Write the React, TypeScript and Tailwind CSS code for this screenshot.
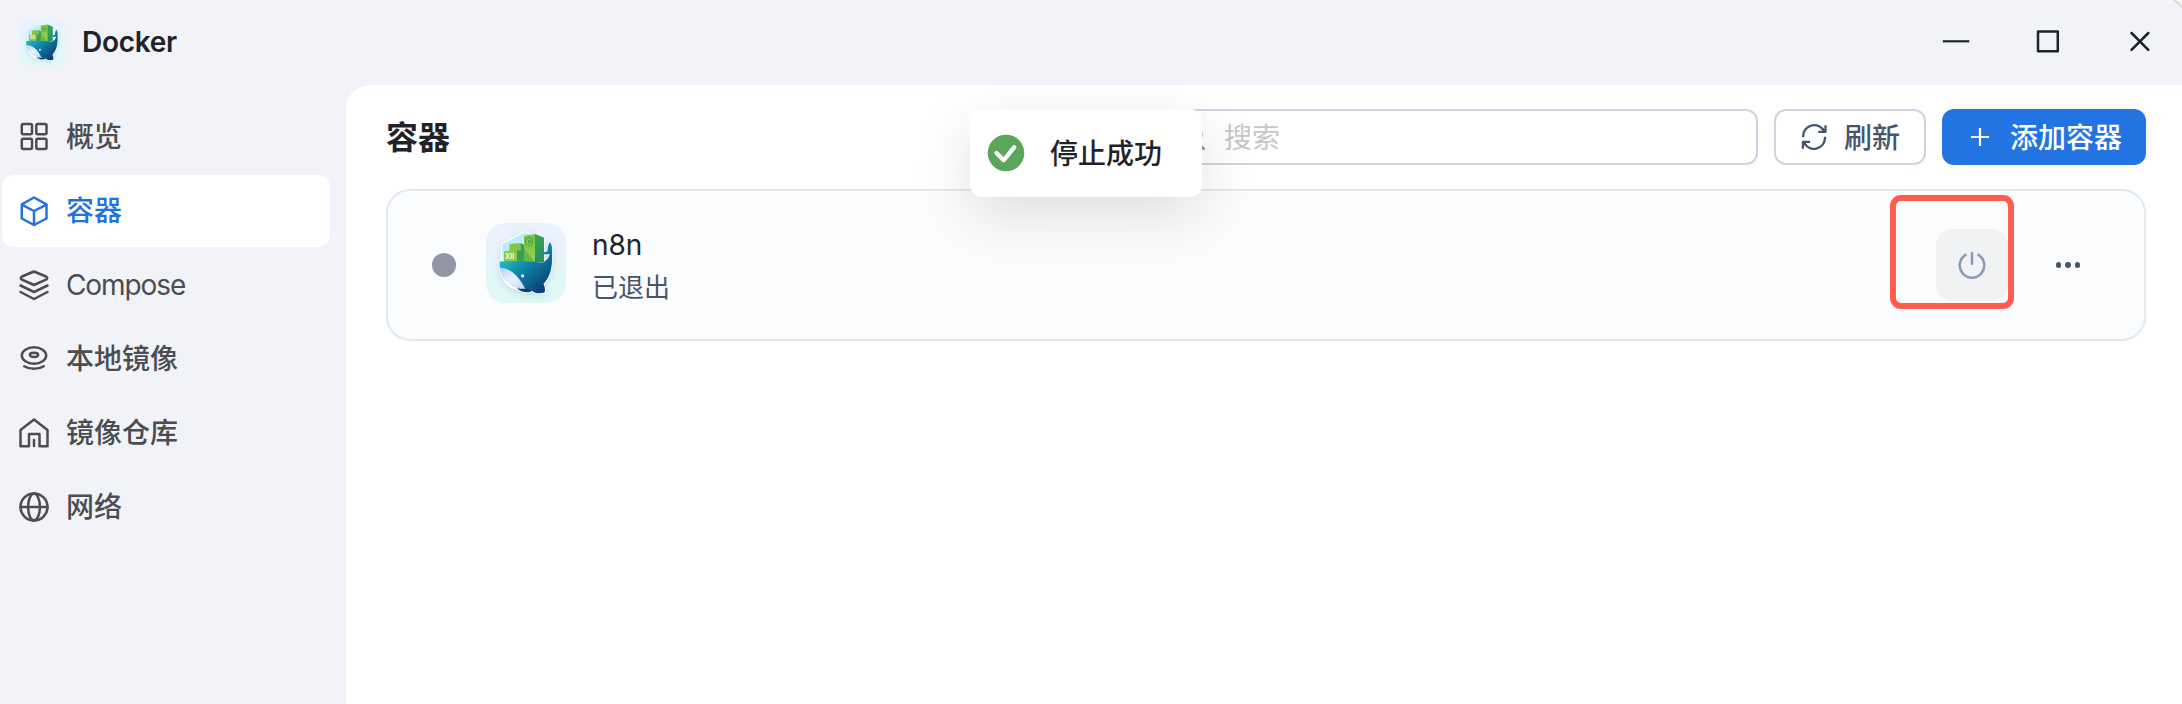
import type { ReactNode } from 'react';

function WhaleLogo({ id, className }: { id: string; className: string }) {
  return (
    <svg viewBox="0 0 80 80" className={className} aria-hidden="true">
      <defs>
        <linearGradient id={`${id}-bg`} x1="0" y1="0" x2="0" y2="1">
          <stop offset="0" stopColor="#ebf1fe" />
          <stop offset="1" stopColor="#dff9f5" />
        </linearGradient>
        <linearGradient id={`${id}-body`} gradientUnits="userSpaceOnUse" x1="18" y1="36" x2="50" y2="72">
          <stop offset="0" stopColor="#22b9c9" />
          <stop offset="0.500" stopColor="#0e7ba0" />
          <stop offset="1" stopColor="#0c3f78" />
        </linearGradient>
        <linearGradient id={`${id}-belly`} x1="0" y1="0" x2="1" y2="1">
          <stop offset="0" stopColor="#b4ccf6" />
          <stop offset="0.500" stopColor="#e9f2ff" />
          <stop offset="1" stopColor="#bcd8fa" />
        </linearGradient>
        <linearGradient id={`${id}-hex`} x1="0" y1="0" x2="1" y2="1">
          <stop offset="0" stopColor="#a9e8fb" />
          <stop offset="1" stopColor="#e4fbff" />
        </linearGradient>
        <linearGradient id={`${id}-box`} x1="0" y1="0" x2="0" y2="1">
          <stop offset="0" stopColor="#79bf44" />
          <stop offset="1" stopColor="#98d24e" />
        </linearGradient>
        <linearGradient id={`${id}-side`} x1="0" y1="0" x2="0" y2="1">
          <stop offset="0" stopColor="#3ea058" />
          <stop offset="1" stopColor="#25935f" />
        </linearGradient>
        <filter id={`${id}-shadow`} x="-30%" y="-30%" width="160%" height="160%">
          <feDropShadow dx="0" dy="2" stdDeviation="3" floodColor="#3c7fa8" floodOpacity="0.220" />
        </filter>
      </defs>
      <rect width="80" height="80" rx="20" fill={`url(#${id}-bg)`} />
      <g filter={`url(#${id}-shadow)`}>
        <path d="M39.500 8.500 L58 18 L58 40 L15.500 40 L15.500 21 Z" fill={`url(#${id}-hex)`} stroke="#fff" strokeWidth="1.200" strokeLinejoin="round" />
        <path d="M13.500 38 H58 C62 36 64 34 63.500 31 C60 32 57 31.500 55.500 29.500 C58 29.300 60 29 61.500 28 C61.500 24 62.500 21 64 19 C66 22 66.500 26 66 30 C66.500 41 65.500 52 57.500 61 C59 64 59.500 68 58.500 69.500 C54 71 49 70.500 45.500 68 C42 70.500 36 70 32 66.500 C21 64.500 12.500 54 13.500 38 Z" fill="#fff" stroke="#fff" strokeWidth="1.400" strokeLinejoin="round" />
      </g>
      <path d="M23.500 21 L34.500 20 V39 H23.500 Z" fill="#84c63f" />
      <path d="M34.500 20 L38.500 22 V39 H34.500 Z" fill="#35a052" />
      <path d="M18 28 L31 27.500 V39 H18 Z" fill="#8bca45" />
      <path d="M31 27.500 H37 L41 39 H31 Z" fill="#36a154" />
      <path d="M38 13 L49 11 V39 H38 Z" fill={`url(#${id}-box)`} />
      <path d="M38 26 L49 39 H38 Z" fill="#3fa64f" opacity="0.550" />
      <path d="M49 11 L58 14.500 V39 H49 Z" fill={`url(#${id}-side)`} />
      <path d="M43 14.500 L46.500 16.200 V21 L43 23 L39.500 21 V16.200 Z M42.500 17 V20.500 M44.800 17.500 H43.500 V19 H44.800 V20.500" fill="none" stroke="#3f9d3d" strokeWidth="0.800" />
      <text x="19" y="35.500" fontSize="7" fontWeight="700" fill="#effbd8" fontFamily="Inter, sans-serif">XII</text>
      <path d="M31 65 C35 66 39 66 43 65.500 L46 68 C42 70.500 35 69.500 31 65 Z" fill="#0d3d70" />
      <path d="M13.500 38.500 C28 37.500 45 38.500 57 39.500 C61 37 63.500 34 63.500 31 C60 32 57 31.500 55.500 29.500 C58 29.300 60 29 61.500 28 C61.500 24 62.500 21 64 19 C66 22 66.500 26 66 30 C66.500 41 65.500 52 57.500 61 C59 64 59.500 68 58.500 69.500 C54 71 49 70.500 45.500 67.500 C42 66.500 41.500 66 38.500 65.500 C24 65 12.500 54 13.500 38.500 Z" fill={`url(#${id}-body)`} />
      <path d="M13.500 44.500 C25 45.500 33 53 39 65.500 C25 65 15 57 13.500 44.500 Z" fill={`url(#${id}-belly)`} />
      <circle cx="36.600" cy="52.800" r="1.600" fill="#e8fbff" />
    </svg>
  );
}

function LineIcon({ className, children }: { className: string; children: ReactNode }) {
  return (
    <svg viewBox="0 0 32 32" className={className} fill="none" stroke="currentColor" strokeWidth="2.500" strokeLinecap="round" strokeLinejoin="round" aria-hidden="true">
      {children}
    </svg>
  );
}

const navItems: { label: string; icon: ReactNode; active?: boolean; latin?: boolean }[] = [
  {
    label: '概览',
    icon: (
      <>
        <rect x="3.800" y="3" width="10.200" height="10.200" rx="1.500" />
        <rect x="18.300" y="3" width="10.200" height="10.200" rx="1.500" />
        <rect x="3.800" y="17.800" width="10.200" height="10.200" rx="1.500" />
        <rect x="18.300" y="17.800" width="10.200" height="10.200" rx="1.500" />
      </>
    ),
  },
  {
    label: '容器',
    active: true,
    icon: (
      <>
        <path d="M16 2.500 L28.500 9.300 V23.500 L16 30 L3.800 23.500 V9.300 Z" />
        <path d="M4.300 9.800 L16 16 L28 9.800 M16 16 V29.500" />
      </>
    ),
  },
  {
    label: 'Compose',
    latin: true,
    icon: (
      <>
        <path d="M16 2.500 L28 7.500 Q30.500 9 28 10.600 L16 16 L4 10.600 Q1.500 9 4 7.500 Z" />
        <path d="M2.500 16.500 L16 23 L29.500 16.500 M2.500 23 L16 30 L29.500 23" />
      </>
    ),
  },
  {
    label: '本地镜像',
    icon: (
      <>
        <ellipse cx="16" cy="12.500" rx="12.200" ry="8.200" />
        <ellipse cx="16" cy="11.800" rx="4.200" ry="2.100" />
        <path d="M6.200 23.300 C11.500 26.700 20.500 26.700 25.800 23.300" />
      </>
    ),
  },
  {
    label: '镜像仓库',
    icon: (
      <>
        <path d="M11 29.200 H2.500 V13 L16 2.500 L29.500 13 V29.200 H21.500 V17 H11 Z" />
        <path d="M16 23 V29" />
      </>
    ),
  },
  {
    label: '网络',
    icon: (
      <>
        <circle cx="16" cy="16" r="13.500" />
        <ellipse cx="16" cy="16" rx="5.900" ry="13.500" />
        <path d="M2.500 16 H29.500" />
      </>
    ),
  },
];

function TitleBar() {
  return (
    <header className="flex h-[85px] items-center pr-[30px] pb-[2px] pl-[18px]">
      <WhaleLogo id="title" className="size-[48px]" />
      <h1 className="ml-[16px] text-[28px] leading-none font-semibold tracking-[-0.3px] text-[#1f2329]">Docker</h1>
      <div className="ml-auto flex gap-[68px] text-[#1f2329]">
        <svg viewBox="0 0 24 24" className="size-[24px] overflow-visible" fill="none" stroke="currentColor" strokeWidth="2.200" aria-hidden="true">
          <path d="M-1.200 11.300 H25.300" />
        </svg>
        <svg viewBox="0 0 24 24" className="size-[24px]" fill="none" stroke="currentColor" strokeWidth="2.500" strokeLinejoin="round" aria-hidden="true">
          <rect x="2" y="1.500" width="19.800" height="19.800" />
        </svg>
        <svg viewBox="0 0 24 24" className="size-[24px]" fill="none" stroke="currentColor" strokeWidth="2.500" strokeLinecap="round" aria-hidden="true">
          <path d="M3.500 3 L20.300 19.800 M20.300 3 L3.500 19.800" />
        </svg>
      </div>
    </header>
  );
}

function Sidebar() {
  return (
    <nav className="flex w-[346px] shrink-0 flex-col gap-[2px] pt-[16px] pr-[16px] pl-[2px]">
      {navItems.map((item) => (
        <a
          key={item.label}
          className={
            item.active
              ? 'flex h-[72px] items-center rounded-[12px] bg-white pl-[16px] text-[28px] text-[#1f73e0]'
              : 'flex h-[72px] items-center rounded-[12px] pl-[16px] text-[28px] text-[#4b4d52]'
          }
        >
          <LineIcon className="size-[32px]">{item.icon}</LineIcon>
          <span className={item.latin ? 'ml-[16px] leading-none tracking-[-1.1px]' : 'ml-[16px] leading-none font-medium'}>
            {item.label}
          </span>
        </a>
      ))}
    </nav>
  );
}

function Toolbar() {
  return (
    <div className="flex h-[56px] items-center">
      <h2 className="pt-[2px] text-[32px] leading-none font-bold text-[#1f2329]">容器</h2>
      <div className="ml-auto flex h-[56px] w-[600px] items-center rounded-[12px] border-2 border-[#cbd5e1] bg-white pl-[18px]">
        <svg viewBox="0 0 28 28" className="size-[28px]" fill="none" stroke="#8095b4" strokeWidth="2.400" strokeLinecap="round" aria-hidden="true">
          <circle cx="12.500" cy="12" r="10.800" />
          <path d="M20.500 20.500 L25.800 25.800" />
        </svg>
        <span className="ml-[18px] pt-[2px] text-[28px] leading-none text-[#c6c7c9]">搜索</span>
      </div>
      <button className="ml-[16px] flex h-[56px] w-[152px] items-center rounded-[12px] border-2 border-[#cbd5e1] bg-white pl-[24px] text-[28px] font-medium text-[#475569]">
        <svg viewBox="0 0 28 28" className="size-[28px]" fill="none" stroke="currentColor" strokeWidth="2.300" strokeLinecap="square" strokeLinejoin="round" aria-hidden="true">
          <path d="M3.200 13 A11 11 0 0 1 24.300 8.700 M25.500 3.300 V8.900 H19.500" />
          <path d="M25 15 A11 11 0 0 1 4 19.500 M2.900 24.700 V18.900 H9" />
        </svg>
        <span className="ml-[16px] pt-[2px] leading-none whitespace-nowrap">刷新</span>
      </button>
      <button className="ml-[16px] flex h-[56px] w-[204px] items-center rounded-[12px] bg-[#2274e2] pl-[28px] text-[28px] font-medium text-white">
        <svg viewBox="0 0 20 20" className="size-[20px]" fill="none" stroke="currentColor" strokeWidth="2.200" aria-hidden="true">
          <path d="M10 1 V19 M1 10 H19" />
        </svg>
        <span className="ml-[20px] pt-[2px] leading-none whitespace-nowrap">添加容器</span>
      </button>
    </div>
  );
}

function ContainerCard() {
  return (
    <article className="mt-[24px] flex h-[152px] items-center rounded-[24px] border-2 border-[#e2e8f0] bg-[#fbfcfe] pr-[40px] pl-[44px]">
      <span className="size-[24px] rounded-full bg-[#9494a7]" />
      <WhaleLogo id="card" className="-mt-[4px] ml-[30px] size-[80px]" />
      <div className="ml-[26px] flex flex-col pt-[3px]">
        <span className="text-[28px] leading-[42px] text-[#1f2329]">n8n</span>
        <span className="text-[26px] leading-[43px] text-[#475569]">已退出</span>
      </div>
      <div className="ml-auto flex gap-[24px]">
        <div className="relative flex size-[72px] items-center justify-center rounded-[16px] bg-[#f1f2f4]">
          <svg viewBox="0 0 28 28" className="size-[28px]" fill="none" stroke="#8a9bb5" strokeWidth="2.500" strokeLinecap="round" aria-hidden="true">
            <path d="M14 2 V12.800 M20.400 3.900 A12.300 12.300 0 1 1 7.600 3.900" />
          </svg>
          <div className="absolute -top-[34.5px] -left-[46.5px] h-[114.5px] w-[124px] rounded-[11px] border-[6px] border-[#ff5c50]" />
        </div>
        <div className="flex size-[72px] items-center justify-center gap-[4px]">
          <span className="size-[5.500px] rounded-full bg-[#475569]" />
          <span className="size-[5.500px] rounded-full bg-[#475569]" />
          <span className="size-[5.500px] rounded-full bg-[#475569]" />
        </div>
      </div>
    </article>
  );
}

function Toast() {
  return (
    <div className="absolute top-[24px] left-[624px] flex h-[88px] w-[232px] items-center rounded-[12px] bg-white pl-[17px] shadow-[0_18px_60px_0_rgba(0,0,0,0.12)]">
      <svg viewBox="0 0 38 38" className="size-[38px]" aria-hidden="true">
        <circle cx="19" cy="19" r="18.300" fill="#5ba65b" />
        <path d="M9.500 19 L16.600 26.300 L27.300 13.200" fill="none" stroke="#fff" strokeWidth="4.200" strokeLinecap="round" strokeLinejoin="round" />
      </svg>
      <span className="ml-[25px] pt-[1px] text-[28px] leading-none font-medium whitespace-nowrap text-[#1f2329]">停止成功</span>
    </div>
  );
}

export default function App() {
  return (
    <div className="relative flex h-[704px] w-[2182px] flex-col overflow-hidden bg-[#f2f3f9] font-['Inter','Noto_Sans_CJK_SC',sans-serif]">
      <TitleBar />
      <div className="flex min-h-0 flex-1">
        <Sidebar />
        <main className="relative flex-1 overflow-hidden rounded-tl-[24px] bg-white pt-[24px] pr-[36px] pl-[40px]">
          <Toolbar />
          <ContainerCard />
          <Toast />
        </main>
      </div>
      <svg viewBox="0 0 10 10" className="absolute top-0 right-0 size-[10px]" aria-hidden="true">
        <path d="M2 0 Q7 3 10 7.500 V0 Z" fill="#f7f7f5" />
        <path d="M2 0 Q7 3 10 7.500" fill="none" stroke="#d3d4d8" strokeWidth="1.500" />
      </svg>
    </div>
  );
}
